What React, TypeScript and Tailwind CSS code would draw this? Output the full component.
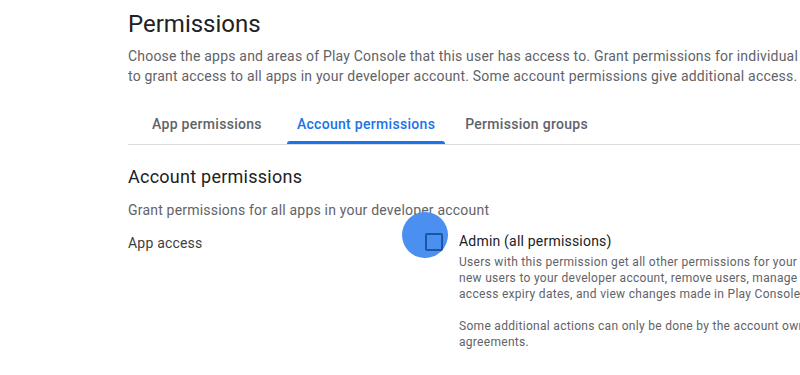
import React from "react";

export default function App() {
  return (
    <div
      className="relative w-[800px] h-[375px] overflow-hidden bg-white"
      style={{ fontFamily: "Roboto, 'Noto Sans', sans-serif" }}
    >
      <div className="w-[1000px] pl-[128px] pt-[8px] flex flex-col">
        <h1 className="text-[24px] leading-[32px] text-[#202124] font-normal">Permissions</h1>
        <div className="mt-[6px] text-[14px] leading-[20px] tracking-[0.2px] text-[#5f6368] whitespace-nowrap">
          <div>Choose the apps and areas of Play Console that this user has access to. Grant permissions for individual apps, or</div>
          <div>to grant access to all apps in your developer account. Some account permissions give additional access.</div>
        </div>

        <div className="mt-[14px] flex border-b border-[#dadce0] pl-[14px]">
          <div className="relative px-[10px] pt-[14px] pb-[10px] text-[14px] leading-[20px] tracking-[0.3px] font-medium text-[#5f6368]">
            App permissions
          </div>
          <div className="relative ml-[15px] px-[10px] pt-[14px] pb-[10px] text-[14px] leading-[20px] tracking-[0.3px] font-medium text-[#1a73e8]">
            Account permissions
            <div className="absolute left-0 right-0 bottom-0 h-[3px] rounded-t-[3px] bg-[#1a73e8]" />
          </div>
          <div className="relative ml-[10px] px-[10px] pt-[14px] pb-[10px] text-[14px] leading-[20px] tracking-[0.3px] font-medium text-[#5f6368]">
            Permission groups
          </div>
        </div>

        <h2 className="mt-[20px] text-[18px] leading-[24px] tracking-[0.25px] text-[#202124] font-normal">Account permissions</h2>
        <div className="mt-[11px] text-[14px] leading-[20px] tracking-[0.2px] text-[#5f6368]">
          Grant permissions for all apps in your developer account
        </div>

        <div className="mt-[11px] flex">
          <div className="w-[297px] pt-[2px] text-[14px] leading-[20px] tracking-[0.2px] text-[#3c4043]">App access</div>
          <div className="relative w-[18px] h-[18px] mt-[2px]">
            <div className="absolute left-[-23px] top-[-21px] w-[46px] h-[46px] rounded-full bg-[#4b8ff0]" />
            <div className="absolute inset-0 rounded-[2px] border-2 border-[#1b55a6]" />
          </div>
          <div className="ml-[16px] flex flex-col whitespace-nowrap">
            <div className="text-[14px] leading-[20px] tracking-[0.2px] text-[#202124]">Admin (all permissions)</div>
            <div className="mt-[3px] text-[12px] leading-[16px] tracking-[0.3px] text-[#5f6368]">
              <div>Users with this permission get all other permissions for your developer account, and can invite</div>
              <div>new users to your developer account, remove users, manage user permissions, set</div>
              <div>access expiry dates, and view changes made in Play Console.</div>
              <div className="h-[16px]" />
              <div>Some additional actions can only be done by the account owner, such as accepting</div>
              <div>agreements.</div>
            </div>
          </div>
        </div>
      </div>
    </div>
  );
}
